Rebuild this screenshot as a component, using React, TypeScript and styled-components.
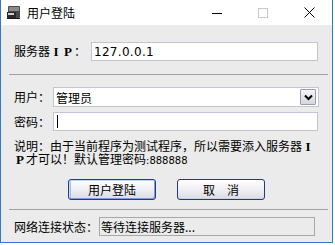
import React from "react";
import styled, { createGlobalStyle } from "styled-components";

const Global = createGlobalStyle`
  html, body { margin: 0; padding: 0; background: #ffffff; }
  body { font-family: "Noto Sans CJK SC", "Noto Sans", sans-serif; font-size: 12px; color: #000; }
`;

const Page = styled.div`
  width: 335px;
  height: 245px;
  display: flex;
  align-items: flex-start;
  overflow: hidden;
`;

const Window = styled.div`
  width: 331px;
  height: 242px;
  border: 1px solid #2b7bd6;
  border-top: none;
  display: flex;
  flex-direction: column;
  background: #ebebeb;
`;

const TitleBar = styled.div`
  height: 25px;
  background: #ffffff;
  display: flex;
  align-items: center;
  padding-left: 5px;
`;

const TitleText = styled.span`
  margin-left: 6px;
  font-size: 12px;
  line-height: 12px;
  flex: 1;
`;

const Ctrl = styled.div`
  width: 46px;
  height: 25px;
  display: flex;
  align-items: center;
  justify-content: center;
`;

const Body = styled.div`
  flex: 1;
  display: flex;
  flex-direction: column;
  padding: 17px 0 0 13px;
`;

const Row = styled.div<{ $mt?: number; $h: number }>`
  display: flex;
  align-items: center;
  height: ${(p) => p.$h}px;
  margin-top: ${(p) => p.$mt ?? 0}px;
`;

const Label = styled.span<{ $w: number }>`
  width: ${(p) => p.$w}px;
  white-space: nowrap;
  line-height: 12px;
`;

const Bold = styled.span`
  font-family: "Liberation Serif", "Noto Serif CJK SC", serif;
  font-weight: bold;
  font-size: 13px;
  display: inline-block;
  width: 12px;
  text-align: center;
`;

const Input = styled.div<{ $w: number }>`
  width: ${(p) => p.$w}px;
  height: 100%;
  box-sizing: border-box;
  border: 1px solid #c4c4d6;
  background: #ffffff;
  display: flex;
  align-items: center;
  padding-left: 2px;
  position: relative;
`;

const MonoText = styled.span`
  font-family: "DejaVu Sans", "Noto Sans", sans-serif;
  font-size: 12px;
  letter-spacing: 0.3px;
`;

const Caret = styled.span`
  width: 1px;
  height: 13px;
  background: #000;
  margin-left: 1px;
`;

const DropBtn = styled.div`
  position: absolute;
  right: 2px;
  top: 1px;
  width: 16px;
  height: 16px;
  box-sizing: border-box;
  border: 1px solid #9c9cae;
  border-radius: 1px;
  background: linear-gradient(#f4f4f8, #d6d6e0);
  display: flex;
  align-items: center;
  justify-content: center;
`;

const Sep = styled.div<{ $mt: number }>`
  height: 1px;
  background: #a0a0a0;
  margin: ${(p) => p.$mt}px 4px 0 -5px;
`;

const Desc = styled.div`
  margin-top: 9px;
  width: 304px;
  line-height: 12px;
  font-size: 12px;
  word-break: break-all;
`;

const Small = styled.span`
  font-family: "DejaVu Sans", sans-serif;
  font-size: 10px;
`;

const Buttons = styled.div`
  display: flex;
  margin-top: 12px;
  padding-left: 54px;
  gap: 21px;
`;

const Button = styled.div<{ $def?: boolean }>`
  width: 88px;
  height: 21px;
  box-sizing: border-box;
  border: 1px solid #1c3e7c;
  border-radius: 3px;
  background: linear-gradient(#ffffff 0%, #f2f2f6 40%, #dcdce6 100%);
  box-shadow: ${(p) =>
    p.$def ? "inset 1px 1px 0 #c8d8f8, inset -1px -1px 0 #7c9ce8, inset 2px 0 0 #a8c0f0" : "inset 0 -1px 0 #d0d0dc"};
  display: flex;
  align-items: center;
  justify-content: center;
  font-size: 12px;
  line-height: 12px;
`;

const StatusBox = styled.div`
  width: 216px;
  height: 19px;
  box-sizing: border-box;
  border: 1px solid #a8a8a8;
  background: #ebebeb;
  display: flex;
  align-items: center;
  padding-left: 1px;
`;

const Icon = () => (
  <svg width="15" height="15" viewBox="0 0 15 15">
    <rect x="2" y="1" width="12" height="12" rx="1" fill="#4a4a4a" />
    <rect x="3" y="2" width="10" height="4" fill="#8a8a8a" />
    <rect x="1" y="7" width="9" height="6" fill="#2a2a2a" />
    <rect x="2" y="8" width="6" height="2" fill="#cfcfcf" />
    <rect x="1" y="13" width="13" height="1" fill="#1a1a1a" />
  </svg>
);

export default function App() {
  return (
    <Page>
      <Global />
      <Window>
        <TitleBar>
          <Icon />
          <TitleText>用户登陆</TitleText>
          <Ctrl>
            <svg width="10" height="10" viewBox="0 0 10 10">
              <rect x="0" y="5" width="10" height="1" fill="#000" />
            </svg>
          </Ctrl>
          <Ctrl>
            <svg width="10" height="10" viewBox="0 0 10 10">
              <rect x="0.5" y="0.5" width="9" height="9" fill="none" stroke="#c8c8c8" />
            </svg>
          </Ctrl>
          <Ctrl>
            <svg width="11" height="11" viewBox="0 0 11 11">
              <path d="M0.5 0.5 L10.5 10.5 M10.5 0.5 L0.5 10.5" stroke="#000" strokeWidth="1" />
            </svg>
          </Ctrl>
        </TitleBar>
        <Body>
          <Row $h={19}>
            <Label $w={77}>
              服务器<Bold>I</Bold><Bold>P</Bold>：
            </Label>
            <Input $w={227}>
              <MonoText>127.0.0.1</MonoText>
            </Input>
          </Row>
          <Sep $mt={13} />
          <Row $h={20} $mt={12}>
            <Label $w={39}>用户：</Label>
            <Input $w={266}>
              管理员
              <DropBtn>
                <svg width="9" height="7" viewBox="0 0 9 7">
                  <path d="M1 1.5 L4.5 5 L8 1.5" stroke="#000" strokeWidth="2" fill="none" />
                </svg>
              </DropBtn>
            </Input>
          </Row>
          <Row $h={19} $mt={5}>
            <Label $w={39}>密码：</Label>
            <Input $w={265}>
              <Caret />
            </Input>
          </Row>
          <Desc>
            说明：由于当前程序为测试程序，所以需要添入服务器<Bold>I</Bold>
            <br />
            <Bold>P</Bold>才可以！默认管理密码<Small>:888888</Small>
          </Desc>
          <Buttons>
            <Button $def>用户登陆</Button>
            <Button>取　消</Button>
          </Buttons>
          <Sep $mt={9} />
          <Row $h={19} $mt={7}>
            <Label $w={85}>网络连接状态：</Label>
            <StatusBox>等待连接服务器...</StatusBox>
          </Row>
        </Body>
      </Window>
    </Page>
  );
}
